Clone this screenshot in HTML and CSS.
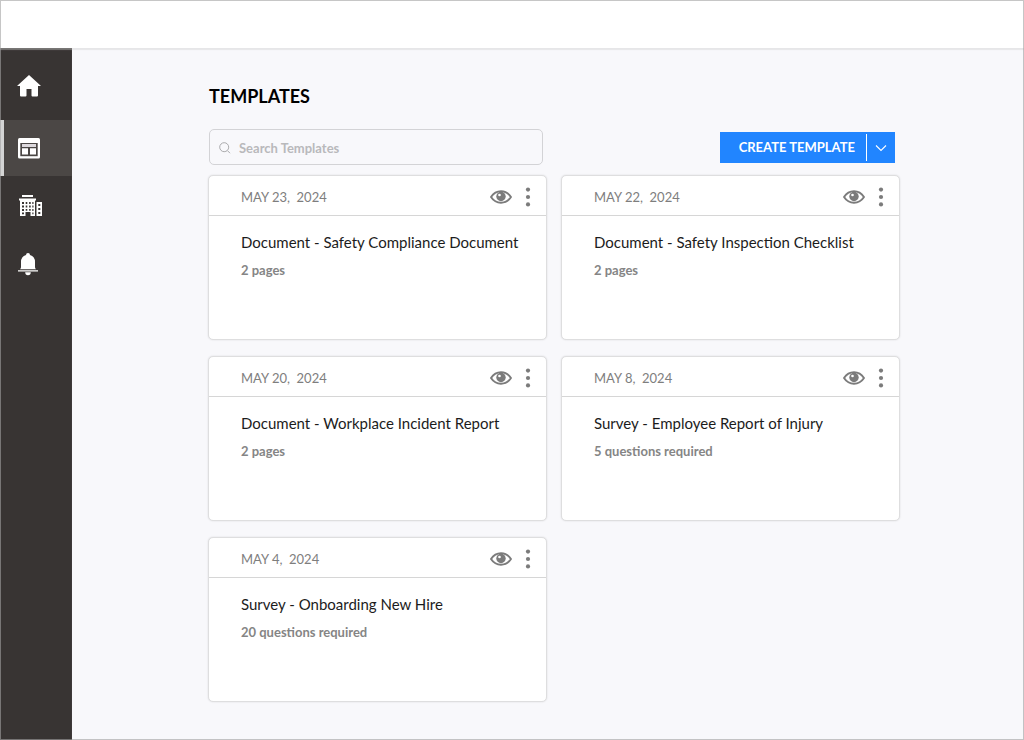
FILE: index.html
```html
<!DOCTYPE html>
<html lang="en">
<head>
<meta charset="utf-8">
<meta name="viewport" content="width=device-width, initial-scale=1">
<title>Templates</title>
<link rel="stylesheet" href="styles.css">
</head>
<body>
<svg class="symbols" aria-hidden="true">
  <symbol id="eye" viewBox="0 0 24 16">
    <path d="M2 8C7 .4 17 .4 22 8C17 15.600 7 15.600 2 8Z" fill="#fff" stroke="currentColor" stroke-width="1.900" stroke-linejoin="round"/>
    <circle cx="12" cy="7.500" r="4.700" fill="currentColor"/>
    <circle cx="10.500" cy="6" r="1.300" fill="#fff"/>
  </symbol>
  <symbol id="dots" viewBox="0 0 6 20">
    <g fill="currentColor"><circle cx="3" cy="2.600" r="2.100"/><circle cx="3" cy="10" r="2.100"/><circle cx="3" cy="17.400" r="2.100"/></g>
  </symbol>
</svg>
<div class="app">
  <header class="topbar"></header>
  <div class="body">
    <nav class="sidebar" aria-label="Main">
      <a class="nav-item nav-home" href="#" aria-label="Home">
        <svg width="26" height="24" viewBox="0 0 26 24"><path d="M13 1L1 12h3v9.500q0 1 1 1h4.500q1 0 1-1V15h5v6.500q0 1 1 1H21q1 0 1-1V12h3Z" fill="#fff"/></svg>
      </a>
      <a class="nav-item nav-active" href="#" aria-label="Templates" aria-current="page">
        <svg width="22" height="21" viewBox="0 0 22 21"><rect width="22" height="20.500" rx="1.500" fill="#fff"/><path d="M2.300 5h17.400v13.200H2.300Z" fill="#4b4745"/><path d="M4 6h14v3H4Z" fill="#ddd9dd"/><path d="M4 10.300h6v6.200H4ZM12 10.300h6v6.200h-6Z" fill="#fff"/></svg>
      </a>
      <a class="nav-item nav-building" href="#" aria-label="Company">
        <svg width="24" height="22" viewBox="0 0 24 22"><path d="M3 0h11v2H3ZM0 3.500h17v2H0ZM1 5h15v16h-4.500v-4h-5v4H1ZM17.500 7H23v14h-5.500Z" fill="#fff"/><g fill="#383433"><path d="M3 7h2v2H3Zm3.700 0h1.600v2H6.700Zm3.400 0h1.600v2h-1.600Zm3.200 0h1.200v2h-1.200ZM3 10.500h2v2H3Zm3.700 0h1.600v2H6.700Zm3.400 0h1.600v2h-1.600Zm3.200 0h1.200v2h-1.200ZM3 14h2v2H3Zm3.700 0h1.600v1.700H6.700Zm3.400 0h1.600v1.700h-1.600Zm3.200 0h1.200v2h-1.200ZM3 17.500h2v1.700H3Zm10.300 0h1.200v1.700h-1.200ZM19.300 9h2v2h-2Zm0 4h2v2h-2Zm0 4h2v2h-2Z"/></g></svg>
      </a>
      <a class="nav-item" href="#" aria-label="Notifications">
        <svg width="20" height="23" viewBox="0 0 20 23"><path d="M10 0q2 0 2 2q5 1.500 5 7v6H3V9Q3 3.500 8 2q0-2 2-2ZM0 17.200h20v1.400H0ZM2 16.300q1-.8 1-2.300h14q0 1.500 1 2.300ZM7.200 19.200h5.600q0 3-2.800 3t-2.800-3Z" fill="#fff"/></svg>
      </a>
    </nav>
    <main class="content">
      <h1 class="title">TEMPLATES</h1>
      <div class="toolbar">
        <label class="search">
          <svg width="12" height="12" viewBox="0 0 12 12" fill="none" stroke="#aaaaac"><circle cx="5.200" cy="5.200" r="4.500"/><path d="M8.500 8.700L11 11.200"/></svg>
          <input class="search-input" type="search" placeholder="Search Templates" aria-label="Search Templates">
        </label>
        <div class="split">
          <button class="create" type="button">CREATE TEMPLATE</button>
          <button class="create-more" type="button" aria-label="More create options"><svg width="12" height="8" viewBox="0 0 12 8"><path d="M1 1.500L6 6.500L11 1.500" fill="none" stroke="#fff" stroke-width="1.100"/></svg></button>
        </div>
      </div>
      <div class="grid">
        <article class="card">
          <div class="card-head"><time class="date">MAY 23,&nbsp; 2024</time><button class="icon" type="button" aria-label="Preview"><svg width="24" height="16"><use href="#eye"/></svg></button><button class="icon" type="button" aria-label="More"><svg width="6" height="20"><use href="#dots"/></svg></button></div>
          <div class="card-body"><h2 class="name">Document - Safety Compliance Document</h2><p class="meta">2 pages</p></div>
        </article>
        <article class="card">
          <div class="card-head"><time class="date">MAY 22,&nbsp; 2024</time><button class="icon" type="button" aria-label="Preview"><svg width="24" height="16"><use href="#eye"/></svg></button><button class="icon" type="button" aria-label="More"><svg width="6" height="20"><use href="#dots"/></svg></button></div>
          <div class="card-body"><h2 class="name">Document - Safety Inspection Checklist</h2><p class="meta">2 pages</p></div>
        </article>
        <article class="card">
          <div class="card-head"><time class="date">MAY 20,&nbsp; 2024</time><button class="icon" type="button" aria-label="Preview"><svg width="24" height="16"><use href="#eye"/></svg></button><button class="icon" type="button" aria-label="More"><svg width="6" height="20"><use href="#dots"/></svg></button></div>
          <div class="card-body"><h2 class="name">Document - Workplace Incident Report</h2><p class="meta">2 pages</p></div>
        </article>
        <article class="card">
          <div class="card-head"><time class="date">MAY 8,&nbsp; 2024</time><button class="icon" type="button" aria-label="Preview"><svg width="24" height="16"><use href="#eye"/></svg></button><button class="icon" type="button" aria-label="More"><svg width="6" height="20"><use href="#dots"/></svg></button></div>
          <div class="card-body"><h2 class="name">Survey - Employee Report of Injury</h2><p class="meta">5 questions required</p></div>
        </article>
        <article class="card">
          <div class="card-head"><time class="date">MAY 4,&nbsp; 2024</time><button class="icon" type="button" aria-label="Preview"><svg width="24" height="16"><use href="#eye"/></svg></button><button class="icon" type="button" aria-label="More"><svg width="6" height="20"><use href="#dots"/></svg></button></div>
          <div class="card-body"><h2 class="name">Survey - Onboarding New Hire</h2><p class="meta">20 questions required</p></div>
        </article>
      </div>
    </main>
  </div>
</div>
</body>
</html>
```

FILE: styles.css
```css
* {
  box-sizing: border-box;
}

body {
  margin: 0;
  background: #f8f8fb;
  color: #1c1c1c;
  font-family: Lato, "Open Sans", sans-serif;
}

/* Thin frame drawn over the edge of the window */
body::after {
  content: "";
  position: fixed;
  inset: 0;
  border: 1px solid rgba(160, 160, 160, 0.6);
  pointer-events: none;
}

button {
  border: 0;
  padding: 0;
  background: none;
  color: inherit;
  font: inherit;
  cursor: pointer;
}

svg {
  display: block;
}

.symbols {
  position: absolute;
  width: 0;
  height: 0;
}

.app {
  display: flex;
  flex-direction: column;
  min-height: 100vh;
}

.topbar {
  height: 48px;
  background: #fff;
}

.body {
  display: flex;
  flex: 1;
  box-shadow: inset 0 2px 1px #e6e6e8;
}

.sidebar {
  display: flex;
  flex-direction: column;
  gap: 2px;
  flex: 0 0 72px;
  padding-top: 10px;
  background: #383433;
  box-shadow: inset 0 2px 1px #787675;
}

.nav-item {
  display: flex;
  align-items: center;
  height: 56px;
  padding-left: 18px;
}

.nav-home {
  margin-bottom: 4px;
  padding-left: 16px;
}

.nav-active {
  padding-left: 14px;
  border-left: 4px solid #d4d4d4;
  background: #4b4745;
}

.nav-building {
  padding-left: 19px;
}

.content {
  flex: 1;
  min-width: 0;
  padding: 36px 124px 36px 136px;
}

.title {
  margin: 0 0 0 1px;
  color: #000;
  font-size: 18px;
  line-height: 24px;
  font-weight: 700;
}

.toolbar {
  display: flex;
  align-items: center;
  justify-content: space-between;
  margin: 21px 5px 10px 1px;
}

.search {
  display: flex;
  align-items: center;
  gap: 8px;
  flex: 0 1 334px;
  height: 36px;
  padding: 1px 9px 0;
  border: 1px solid #d3d3d6;
  border-radius: 5px;
}

.search-input {
  flex: 1;
  min-width: 0;
  padding: 0;
  border: 0;
  outline: 0;
  background: none;
  font: 700 13px/18px Lato, sans-serif;
}

.search-input::placeholder {
  color: #b9b9bb;
  opacity: 1;
}

.split {
  display: flex;
  align-items: center;
  height: 31px;
  margin-top: 1px;
  background: #2185ff;
  color: #fff;
}

.create {
  padding: 0 11px 0 19px;
  font-size: 13px;
  line-height: 27px;
  font-weight: 700;
}

.create-more {
  display: flex;
  align-items: center;
  justify-content: center;
  width: 29px;
  height: 27px;
  border-left: 1px solid #fff;
}

.grid {
  display: grid;
  grid-template-columns: 1fr 1fr;
  gap: 16px 14px;
}

.card {
  min-height: 165px;
  border: 1px solid #dededf;
  border-radius: 5px;
  background: #fff;
  box-shadow: 0 0 2px rgba(0, 0, 0, 0.12);
}

.card-head {
  display: flex;
  align-items: center;
  height: 40px;
  padding: 2px 15px 0 32px;
  border-bottom: 1px solid #d6d6d6;
  color: #7e7e7e;
}

.date {
  flex: 1;
  font-size: 13px;
  line-height: 18px;
}

.icon {
  margin-left: 12px;
  color: #7b7b7b;
}

.card-body {
  padding: 16px 16px 16px 32px;
}

.name {
  margin: 0 0 9px;
  font-size: 15px;
  line-height: 20px;
  font-weight: 400;
}

.meta {
  margin: 0;
  color: #858585;
  font-size: 13px;
  line-height: 18px;
  font-weight: 700;
}
```
